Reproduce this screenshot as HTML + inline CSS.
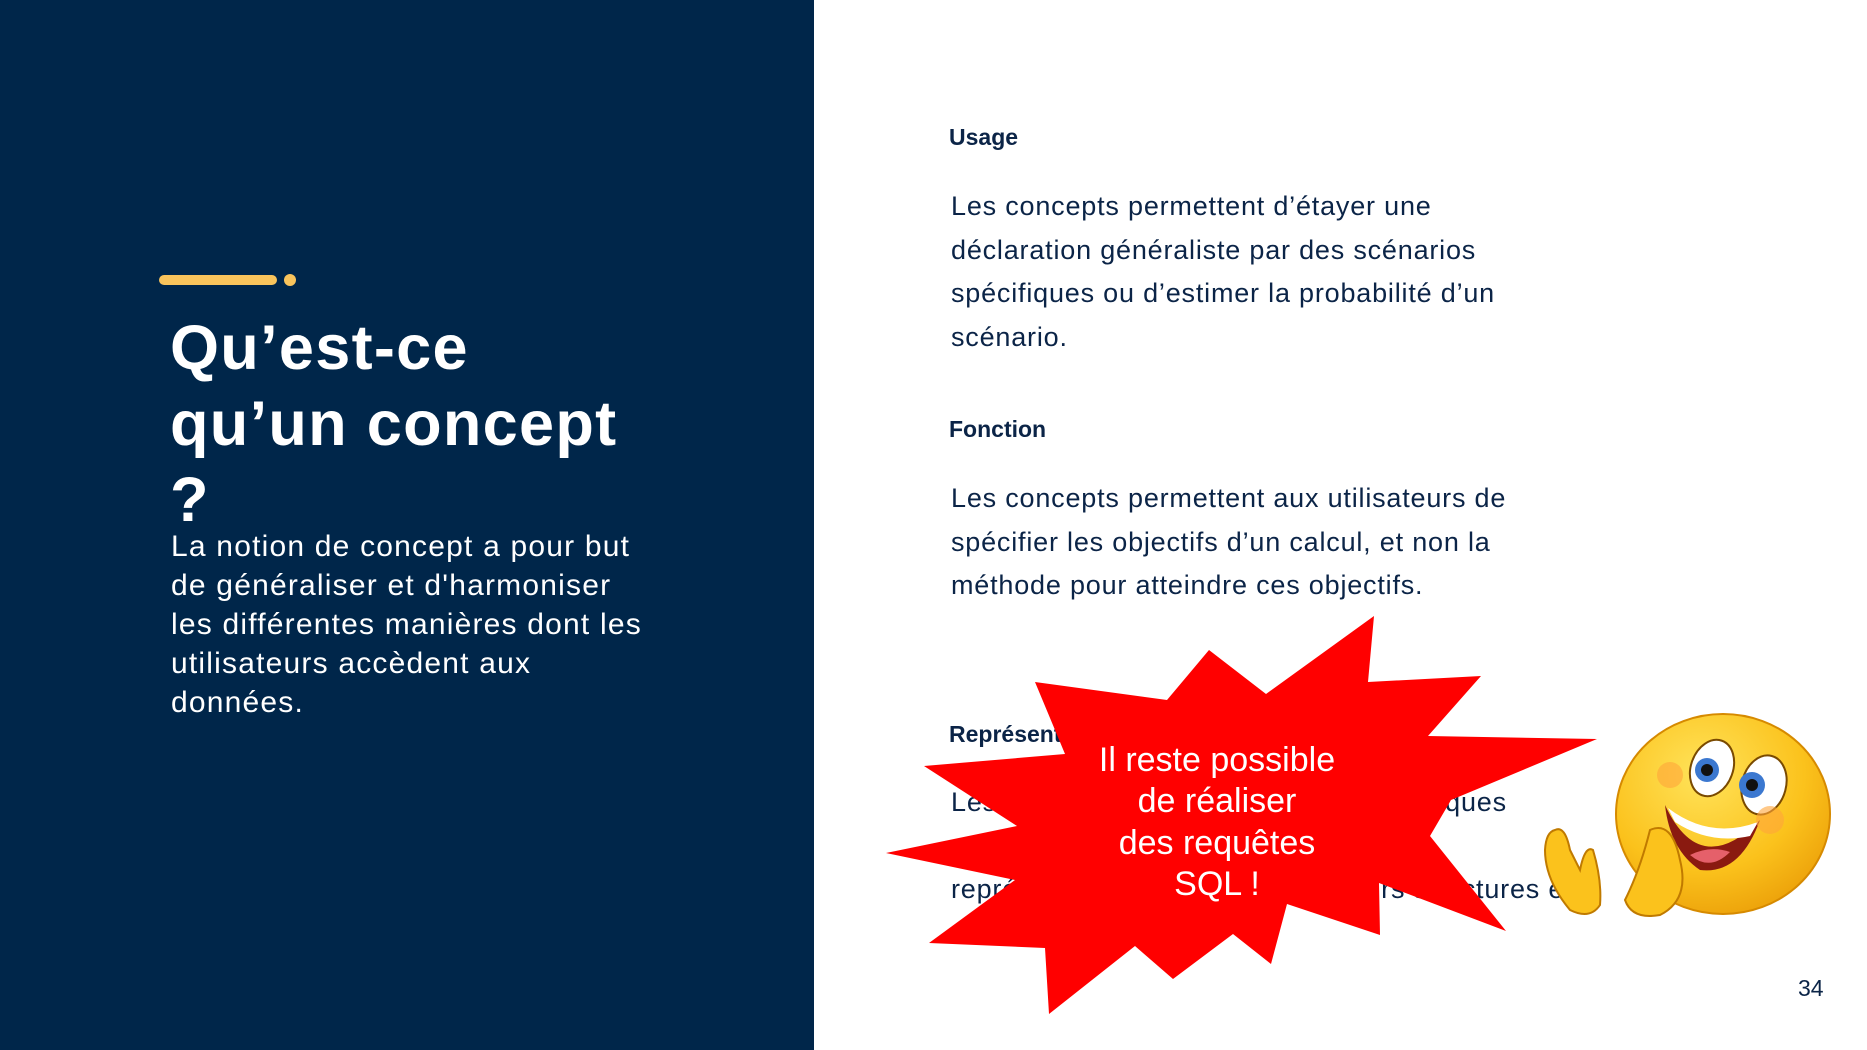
<!DOCTYPE html>
<html><head><meta charset="utf-8"><style>
*{margin:0;padding:0}
body{width:1867px;height:1050px;position:relative;overflow:hidden;background:#fff;font-family:"Liberation Sans",sans-serif}
.left{position:absolute;left:0;top:0;width:814px;height:1050px;background:#00264a}
.t{position:absolute;white-space:nowrap}
.title{left:170px;top:310px;font-size:63px;line-height:76px;font-weight:bold;color:#fff;letter-spacing:1.3px}
.lbody{left:171px;top:527px;font-size:30px;line-height:39px;color:#fff;letter-spacing:1.2px}
.h{left:949px;font-size:23px;font-weight:bold;color:#0b2447}
.b{left:951px;font-size:27px;line-height:43.5px;color:#0b2447;letter-spacing:0.8px}
</style></head><body>
<div class="left"></div>
<div style="position:absolute;left:159px;top:275px;width:118px;height:10px;border-radius:5px;background:#f9c45c"></div>
<div style="position:absolute;left:284px;top:274px;width:12px;height:12px;border-radius:6px;background:#f9c45c"></div>
<div class="t title">Qu’est-ce<br>qu’un concept<br>?</div>
<div class="t lbody">La notion de concept a pour but<br>de généraliser et d'harmoniser<br>les différentes manières dont les<br>utilisateurs accèdent aux<br>données.</div>

<div class="t h" style="top:124px">Usage</div>
<div class="t b" style="top:185px">Les concepts permettent d’étayer une<br>déclaration généraliste par des scénarios<br>spécifiques ou d’estimer la probabilité d’un<br>scénario.</div>
<div class="t h" style="top:416px">Fonction</div>
<div class="t b" style="top:477px">Les concepts permettent aux utilisateurs de<br>spécifier les objectifs d’un calcul, et non la<br>méthode pour atteindre ces objectifs.</div>
<div class="t h" style="top:721px">Représentation</div>
<div class="t b" style="top:781px">Les concepts fournissent des vues logiques<br>&nbsp;&nbsp;&nbsp;&nbsp;&nbsp;&nbsp;des données, sans<br>représentations physiques, de leurs structures et<br>&nbsp;&nbsp;&nbsp;&nbsp;&nbsp;&nbsp;de leur stockage.</div>
<div class="t" style="left:1798px;top:975px;font-size:23px;color:#0b2447">34</div>

<svg style="position:absolute;left:0;top:0" width="1867" height="1050" viewBox="0 0 1867 1050">
<polygon fill="#ff0000" points="1374,616 1368,682 1481,676 1428,736 1597,739 1451,800 1430,836 1506,931 1379,883 1380,935 1287,904 1271,964 1233,934 1173,979 1135,946 1049,1014 1045,948 929,943 1015,880 886,853 1017,826 924,766 1065,754 1035,682 1167,700 1209,650 1266,694"/>
<g fill="#fff" font-family="Liberation Sans, sans-serif" font-size="34" text-anchor="middle">
<text x="1217" y="771">Il reste possible</text>
<text x="1217" y="812">de réaliser</text>
<text x="1217" y="854">des requêtes</text>
<text x="1217" y="895">SQL !</text>
</g>
<defs>
<radialGradient id="fg" cx="0.4" cy="0.3" r="0.8"><stop offset="0" stop-color="#ffe35a"/><stop offset="0.6" stop-color="#fbc21c"/><stop offset="1" stop-color="#e99a06"/></radialGradient>
</defs>
<ellipse cx="1723" cy="814" rx="107" ry="100" fill="url(#fg)" stroke="#d68a00" stroke-width="2"/>
<ellipse cx="1712" cy="768" rx="21" ry="29" fill="#fff" stroke="#7a4a00" stroke-width="2" transform="rotate(20 1712 768)"/>
<ellipse cx="1764" cy="785" rx="22" ry="30" fill="#fff" stroke="#7a4a00" stroke-width="2" transform="rotate(15 1764 785)"/>
<circle cx="1707" cy="770" r="12" fill="#3b78d0"/><circle cx="1707" cy="770" r="6" fill="#111"/>
<circle cx="1752" cy="785" r="13" fill="#3b78d0"/><circle cx="1752" cy="785" r="6" fill="#111"/>
<path d="M1665,805 Q1700,880 1760,820 Q1740,875 1700,870 Q1670,850 1665,805Z" fill="#8a1a10"/>
<path d="M1668,808 Q1710,840 1758,822 L1750,836 Q1710,845 1675,822Z" fill="#fff"/>
<path d="M1690,855 Q1710,845 1730,852 Q1710,872 1690,855Z" fill="#e5606a"/>
<circle cx="1670" cy="775" r="13" fill="#ffa53a" opacity="0.6"/>
<circle cx="1770" cy="820" r="14" fill="#ffa53a" opacity="0.6"/>
<path d="M1650,830 Q1672,820 1680,860 Q1690,900 1660,915 Q1632,920 1625,900 Q1640,870 1650,830Z" fill="#fbc21c" stroke="#c07a00" stroke-width="2"/>
<path d="M1555,830 Q1565,825 1570,850 L1580,870 Q1585,845 1593,850 Q1602,880 1600,905 Q1590,920 1570,910 Q1545,880 1545,850 Q1546,832 1555,830Z" fill="#fbc21c" stroke="#c07a00" stroke-width="2"/>
</svg>
</body></html>
